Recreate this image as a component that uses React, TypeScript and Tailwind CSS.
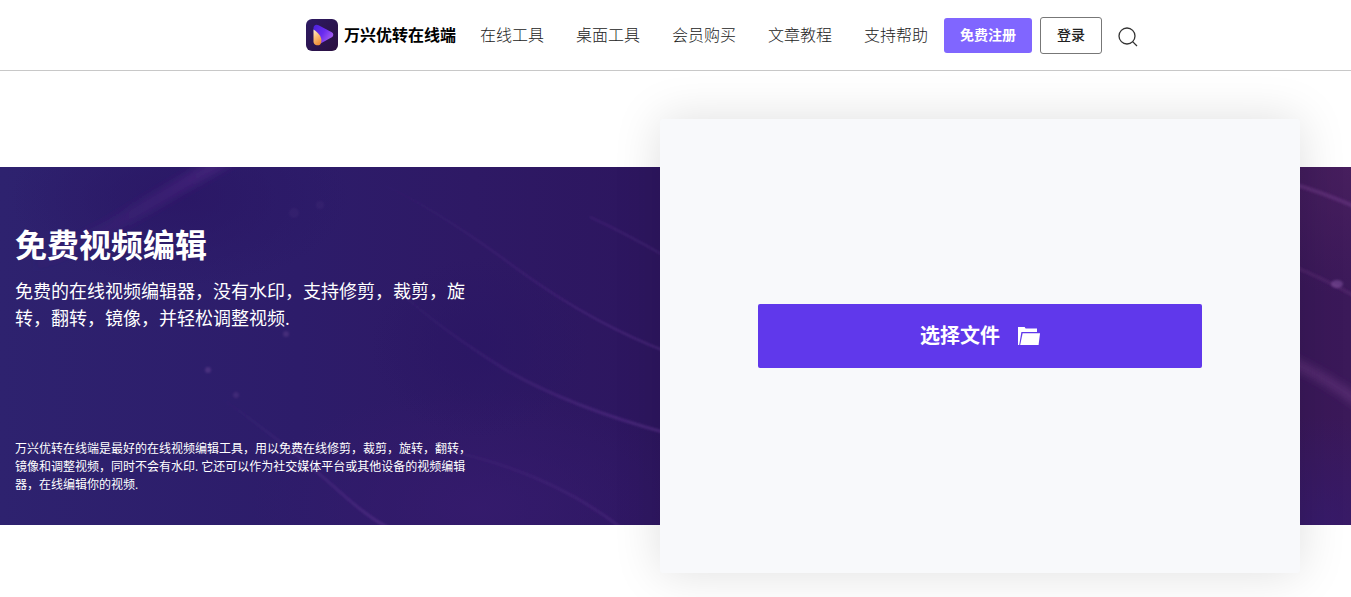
const navItems = ["在线工具", "桌面工具", "会员购买", "文章教程", "支持帮助"];

const Logo = () => {
  return (
    <svg viewBox="0 0 32 32" className="h-8 w-8" aria-hidden="true">
      <defs>
        <linearGradient id="logo-bg" x1="0" y1="0" x2="1" y2="1">
          <stop offset="0" stopColor="#2d1a63" />
          <stop offset="1" stopColor="#2b1040" />
        </linearGradient>
        <linearGradient id="logo-play" x1="0" y1="0" x2="1" y2="0.6">
          <stop offset="0" stopColor="#4a22d8" />
          <stop offset="0.55" stopColor="#6a2cf0" />
          <stop offset="1" stopColor="#a45cf0" />
        </linearGradient>
        <linearGradient id="logo-drop" x1="0" y1="0" x2="0.4" y2="1">
          <stop offset="0" stopColor="#fff0d8" />
          <stop offset="0.5" stopColor="#fbc078" />
          <stop offset="1" stopColor="#f0903c" />
        </linearGradient>
      </defs>
      <rect width="32" height="32" rx="6" fill="url(#logo-bg)" />
      <path d="M7.5 9C7.5 6.2 10 4.8 12.6 6.2L25.8 13.2C27.8 14.4 27.8 17 25.8 18.2L15 24.2C15.8 18.6 13 14.4 7.5 10.8Z" fill="url(#logo-play)" />
      <path d="M7.5 10.6C12.6 14 16.4 18.4 15.2 23.4C14.6 25.8 12.6 26.8 10.6 26.2C8.6 25.6 7.5 24.4 7.5 22.4Z" fill="url(#logo-drop)" />
    </svg>
  );
};

const Header = () => {
  return (
    <header className="border-b border-[#c8c8c8] bg-white">
      <div className="flex h-[70px] items-center justify-center pl-[93px]">
        <a href="#" className="mr-2 flex items-center gap-1.5 text-base font-bold text-black">
          <Logo />
          万兴优转在线端
        </a>
        <nav className="flex">
          {navItems.map((item) => (
            <a key={item} href="#" className="px-4 text-base font-light text-[#222]">
              {item}
            </a>
          ))}
        </nav>
        <div className="flex items-center gap-2">
          <button className="h-[35px] rounded-[3px] bg-[#8066ff] px-4 text-sm font-bold text-white">免费注册</button>
          <button className="h-[37px] rounded-[3px] border border-[#777] px-4 text-sm font-medium text-[#222]">登录</button>
          <button aria-label="搜索" className="ml-2 pt-1 text-[#333]">
            <svg viewBox="0 0 20 20" className="h-5 w-5" fill="none" stroke="currentColor" strokeWidth="1.3">
              <circle cx="9" cy="9" r="8" />
              <path d="M14.6 14.6L19 19" />
            </svg>
          </button>
        </div>
      </div>
    </header>
  );
};

const BandBackground = () => {
  return (
    <svg viewBox="0 0 1351 358" preserveAspectRatio="none" className="absolute inset-0 h-full w-full" aria-hidden="true">
      <defs>
        <linearGradient id="band" x1="0" y1="0" x2="1" y2="0">
          <stop offset="0" stopColor="#2e226f" />
          <stop offset="0.22" stopColor="#2d1c6a" />
          <stop offset="0.35" stopColor="#2e1965" />
          <stop offset="0.48" stopColor="#2d165f" />
          <stop offset="0.9" stopColor="#371659" />
          <stop offset="1" stopColor="#3b1959" />
        </linearGradient>
        <radialGradient id="glow-violet">
          <stop offset="0" stopColor="#361b6e" stopOpacity="0.8" />
          <stop offset="1" stopColor="#361b6e" stopOpacity="0" />
        </radialGradient>
        <radialGradient id="glow-plum">
          <stop offset="0" stopColor="#4a205f" stopOpacity="0.8" />
          <stop offset="1" stopColor="#4a205f" stopOpacity="0" />
        </radialGradient>
        <radialGradient id="glow-blue">
          <stop offset="0" stopColor="#2a1664" stopOpacity="0.8" />
          <stop offset="1" stopColor="#2a1664" stopOpacity="0" />
        </radialGradient>
        <linearGradient id="trail" gradientUnits="userSpaceOnUse" x1="380" y1="0" x2="670" y2="0">
          <stop offset="0" stopColor="#6a3a9a" stopOpacity="0" />
          <stop offset="1" stopColor="#6a3a9a" stopOpacity="0.5" />
        </linearGradient>
        <linearGradient id="trail-low" gradientUnits="userSpaceOnUse" x1="220" y1="0" x2="400" y2="0">
          <stop offset="0" stopColor="#6a3a9a" stopOpacity="0" />
          <stop offset="1" stopColor="#6a3a9a" stopOpacity="0.45" />
        </linearGradient>
        <linearGradient id="beam" gradientUnits="userSpaceOnUse" x1="226" y1="0" x2="30" y2="0">
          <stop offset="0" stopColor="#5a2a8c" stopOpacity="0.5" />
          <stop offset="1" stopColor="#5a2a8c" stopOpacity="0" />
        </linearGradient>
        <filter id="soft" x="-20%" y="-20%" width="140%" height="140%">
          <feGaussianBlur stdDeviation="4" />
        </filter>
        <filter id="fine" x="-20%" y="-20%" width="140%" height="140%">
          <feGaussianBlur stdDeviation="1" />
        </filter>
      </defs>
      <rect width="1351" height="358" fill="url(#band)" />
      <ellipse cx="480" cy="340" rx="230" ry="120" fill="url(#glow-violet)" />
      <ellipse cx="480" cy="180" rx="110" ry="90" fill="url(#glow-blue)" />
      <ellipse cx="180" cy="30" rx="170" ry="90" fill="url(#glow-blue)" />
      <ellipse cx="1351" cy="0" rx="120" ry="130" fill="url(#glow-plum)" />
      <ellipse cx="1320" cy="358" rx="120" ry="110" fill="url(#glow-violet)" />
      <g fill="none" filter="url(#soft)">
        <path d="M236 -14L110 60L10 110" stroke="url(#beam)" strokeWidth="14" />
        <path d="M1290 194Q1325 210 1360 236" stroke="#5c3076" strokeOpacity="0.8" strokeWidth="10" />
      </g>
      <g fill="none" stroke="url(#trail)" filter="url(#fine)">
        <path d="M380 16Q440 44 520 104Q595 158 670 186" strokeWidth="2" />
        <path d="M400 125Q440 162 506 203Q570 240 670 267" strokeWidth="3" />
        <path d="M590 50Q625 66 670 92" strokeWidth="2" strokeOpacity="0.6" />
        <path d="M450 284Q550 306 620 360" strokeWidth="3" strokeOpacity="0.6" />
      </g>
      <g fill="none" filter="url(#fine)">
        <path d="M220 230Q290 280 340 325T410 365" stroke="url(#trail-low)" strokeWidth="3" />
        <path d="M1290 16Q1325 26 1360 42" stroke="#5f2e78" strokeOpacity="0.8" strokeWidth="4" />
        <path d="M1290 98Q1325 112 1360 132" stroke="#5f2e78" strokeOpacity="0.4" strokeWidth="4" />
      </g>
      <g fill="#8a5aa8" filter="url(#fine)">
        <ellipse cx="1337" cy="117" rx="6" ry="4" fillOpacity="0.5" />
        <circle cx="294" cy="46" r="5" fillOpacity="0.08" />
        <circle cx="320" cy="38" r="4" fillOpacity="0.08" />
        <circle cx="208" cy="203" r="3" fillOpacity="0.3" />
        <circle cx="286" cy="167" r="3" fillOpacity="0.25" />
        <circle cx="236" cy="228" r="3" fillOpacity="0.2" />
      </g>
    </svg>
  );
};

const FolderIcon = () => {
  return (
    <svg viewBox="0 0 22 18" className="h-[18px] w-[22px]" fill="currentColor" aria-hidden="true">
      <path d="M0 0H6.6L7.6 1.6H19V5H3.4L1.2 18H0Z" />
      <path d="M4.6 6.2H22L20.6 18H2.2Z" />
    </svg>
  );
};

const Hero = () => {
  return (
    <main className="py-24">
      <section className="relative flex justify-between bg-[#2d1a67] pr-[51px] pl-[15px]">
        <BandBackground />
        <div className="relative flex w-[458px] flex-col justify-between pt-[59px] pb-[31px] text-white">
          <div>
            <h1 className="text-[32px] leading-[38px] font-bold">免费视频编辑</h1>
            <p className="mt-[14px] text-lg leading-[27px]">
              免费的在线视频编辑器，没有水印，支持修剪，裁剪，旋转，翻转，镜像，并轻松调整视频.
            </p>
          </div>
          <p className="text-xs leading-[18px]">
            万兴优转在线端是最好的在线视频编辑工具，用以免费在线修剪，裁剪，旋转，翻转，镜像和调整视频，同时不会有水印. 它还可以作为社交媒体平台或其他设备的视频编辑器，在线编辑你的视频.
          </p>
        </div>
        <div className="relative -my-12 flex min-h-[454px] w-full max-w-[640px] justify-center rounded-[3px] bg-[#f8f9fb] pb-5 shadow-[0_0_48px_rgba(0,0,0,0.13)]">
          <button className="flex h-16 w-[444px] items-center justify-center gap-[18px] self-center rounded-xs bg-[#6038eb] text-xl font-bold text-white">
            选择文件
            <FolderIcon />
          </button>
        </div>
      </section>
    </main>
  );
};

const App = () => {
  return (
    <div className="overflow-hidden bg-white font-['Open_Sans','Noto_Sans_CJK_SC',sans-serif]" lang="zh-CN">
      <Header />
      <Hero />
    </div>
  );
};

export default App;
